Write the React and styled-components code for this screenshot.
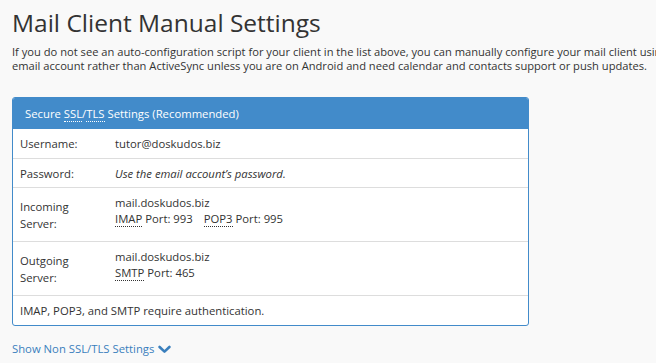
import React from "react";
import styled, { createGlobalStyle } from "styled-components";

const Global = createGlobalStyle`
  html, body { margin: 0; padding: 0; background: #f9f9f9; }
  body { font-family: "Open Sans", "Liberation Sans", sans-serif; color: #333; }
`;

const Page = styled.div`
  padding: 5px 12px 0 12px;
  width: 656px;
  box-sizing: border-box;
  overflow: hidden;
`;

const Title = styled.h1`
  margin: 0;
  font-size: 24.5px;
  font-weight: 400;
  line-height: 36px;
  color: #333;
`;

const Intro = styled.p`
  margin: 4px 0 0 0;
  font-size: 11.15px;
  line-height: 14px;
  white-space: nowrap;
  color: #333;
`;

const Panel = styled.div`
  margin-top: 24px;
  width: 515px;
  border: 1px solid #428bca;
  border-radius: 3px;
  background: #fff;
  overflow: hidden;
`;

const PanelHeader = styled.div`
  background: #428bca;
  color: #fff;
  font-size: 11.3px;
  height: 31px;
  display: flex;
  align-items: center;
  padding: 0 12px;
`;

const Abbr = styled.abbr`
  text-decoration: none;
  border-bottom: 1px dotted ${(p) => (p.$light ? "#fff" : "#333")};
  cursor: help;
`;

const Row = styled.div`
  display: grid;
  grid-template-columns: 95px 1fr;
  align-items: ${(p) => (p.$tall ? "start" : "center")};
  padding: 0 7px;
  height: ${(p) => (p.$tall ? "54px" : "29px")};
  box-sizing: border-box;
  font-size: 11.3px;
  border-top: ${(p) => (p.$first ? "none" : "1px solid #ddd")};
  color: #333;
`;

const Label = styled.div`
  padding-top: ${(p) => (p.$tall ? "10px" : "0")};
  line-height: 17px;
`;

const Value = styled.div`
  font-style: ${(p) => (p.$italic ? "italic" : "normal")};
  padding-top: ${(p) => (p.$tall ? "7px" : "0")};
  line-height: ${(p) => (p.$tall ? "16px" : "17px")};
`;

const Gap = styled.span`
  display: inline-block;
  width: 11px;
`;

const Footer = styled.div`
  border-top: 1px solid #ddd;
  padding: 0 7px;
  height: 29px;
  display: flex;
  align-items: center;
  font-size: 11.3px;
`;

const Toggle = styled.a`
  display: inline-flex;
  align-items: center;
  gap: 4px;
  margin-top: 15px;
  font-size: 11.3px;
  line-height: 16px;
  color: #3a7fbd;
  text-decoration: none;
`;

const Chevron = () => (
  <svg width="13" height="9" viewBox="0 0 13 9">
    <path d="M1.6 2 L6.5 6.6 L11.4 2" fill="none" stroke="#3a7fbd" strokeWidth="2.6" strokeLinecap="round" strokeLinejoin="round" />
  </svg>
);

export default function App() {
  return (
    <Page>
      <Global />
      <Title>Mail Client Manual Settings</Title>
      <Intro>
        If you do not see an auto-configuration script for your client in the list above, you can manually configure your mail client using the settings below. We recommend that you use IMAP for this
        <br />
        email account rather than ActiveSync unless you are on Android and need calendar and contacts support or push updates.
      </Intro>
      <Panel>
        <PanelHeader>
          <span>
            Secure <Abbr $light title="Secure Sockets Layer">SSL</Abbr>/<Abbr $light title="Transport Layer Security">TLS</Abbr> Settings (Recommended)
          </span>
        </PanelHeader>
        <Row $first>
          <Label>Username:</Label>
          <Value>tutor@doskudos.biz</Value>
        </Row>
        <Row>
          <Label>Password:</Label>
          <Value $italic>Use the email account’s password.</Value>
        </Row>
        <Row $tall>
          <Label $tall>Incoming<br />Server:</Label>
          <Value $tall>
            mail.doskudos.biz
            <br />
            <Abbr>IMAP</Abbr> Port: 993<Gap /><Abbr>POP3</Abbr> Port: 995
          </Value>
        </Row>
        <Row $tall>
          <Label $tall>Outgoing<br />Server:</Label>
          <Value $tall>
            mail.doskudos.biz
            <br />
            <Abbr>SMTP</Abbr> Port: 465
          </Value>
        </Row>
        <Footer>IMAP, POP3, and SMTP require authentication.</Footer>
      </Panel>
      <Toggle href="#">
        Show Non SSL/TLS Settings <Chevron />
      </Toggle>
    </Page>
  );
}
